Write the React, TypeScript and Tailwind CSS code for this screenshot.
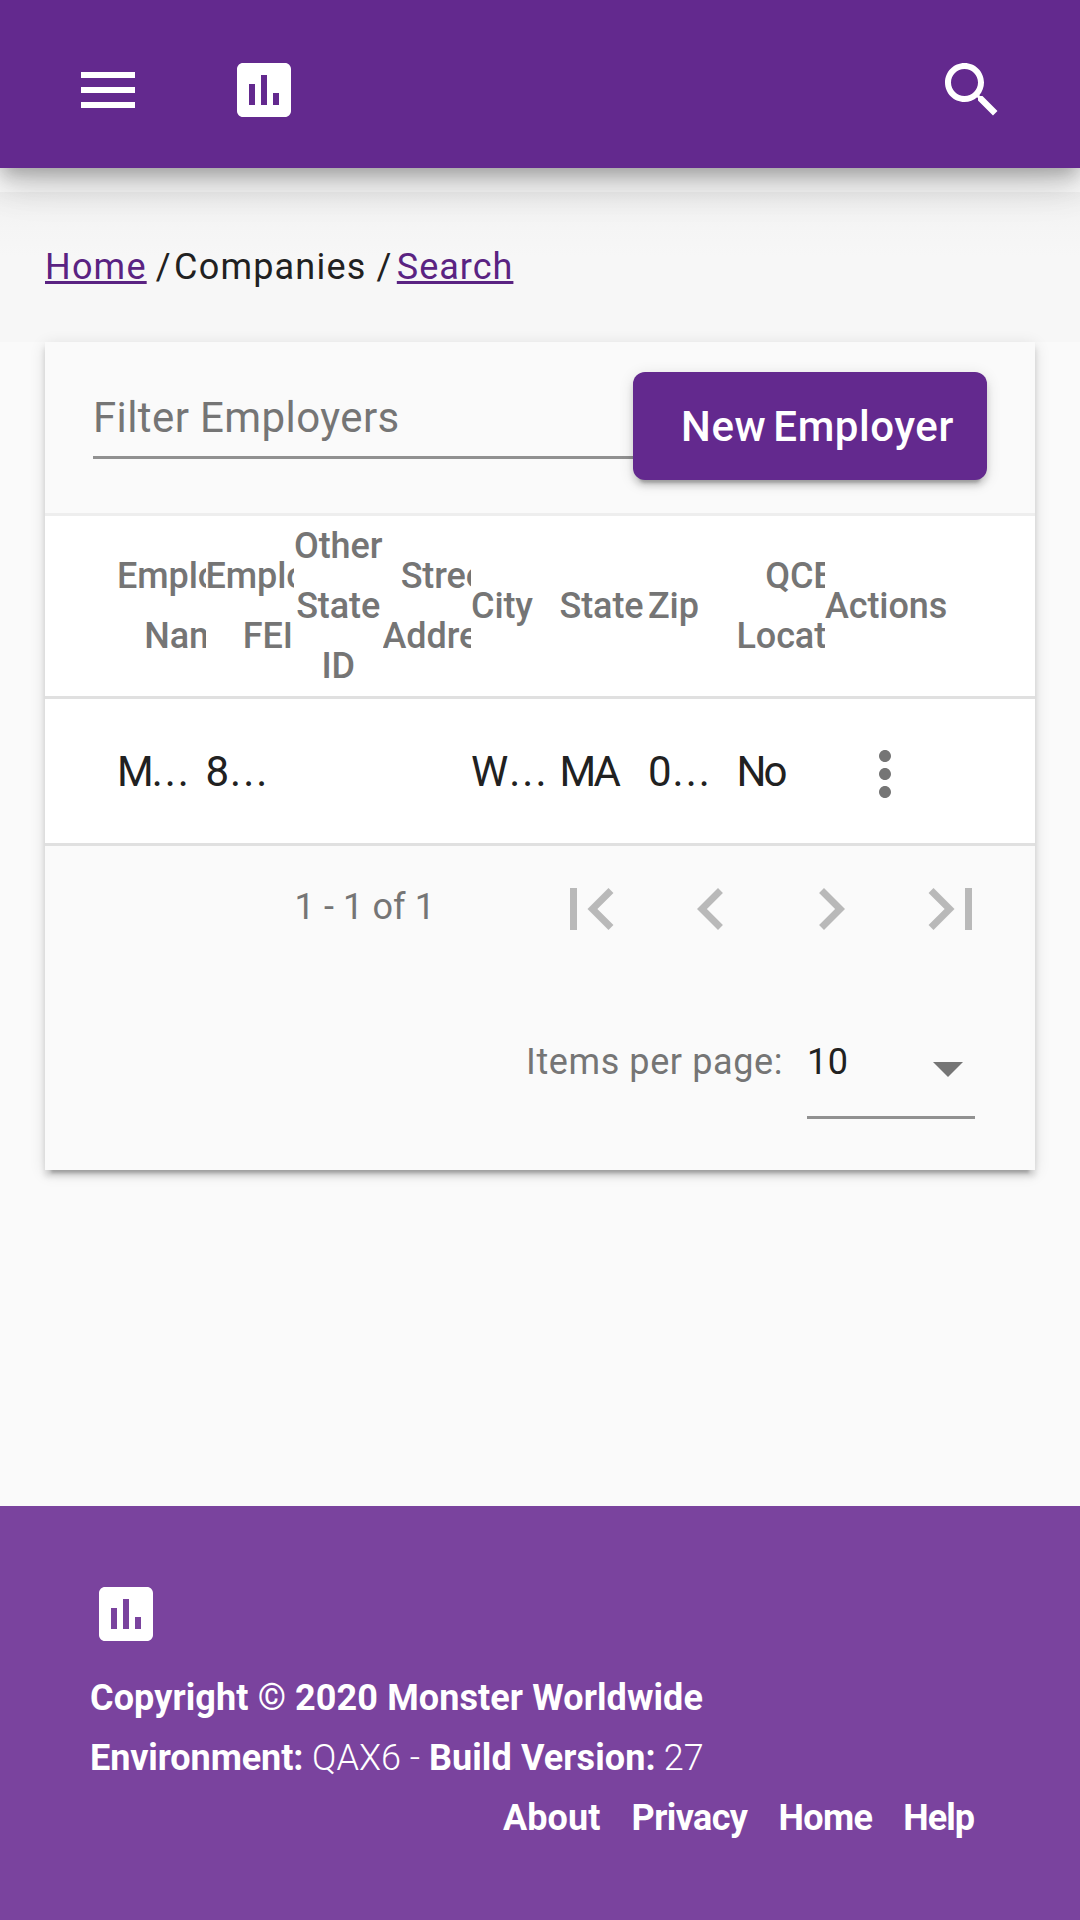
import React from "react";

const icons = {
  menu: "M3 18h18v-2H3v2zm0-5h18v-2H3v2zm0-7v2h18V6H3z",
  chart:
    "M19 3H5c-1.1 0-2 .9-2 2v14c0 1.1.9 2 2 2h14c1.1 0 2-.9 2-2V5c0-1.1-.9-2-2-2zM9 17H7v-7h2v7zm4 0h-2V7h2v10zm4 0h-2v-4h2v4z",
  search:
    "M15.5 14h-.79l-.28-.27C15.41 12.59 16 11.11 16 9.5 16 5.91 13.09 3 9.5 3S3 5.91 3 9.5 5.91 16 9.5 16c1.61 0 3.09-.59 4.23-1.57l.27.28v.79l5 4.99L20.49 19l-4.99-5zm-6 0C7.01 14 5 11.99 5 9.5S7.01 5 9.5 5 14 7.01 14 9.5 11.99 14 9.5 14z",
  more: "M12 8c1.1 0 2-.9 2-2s-.9-2-2-2-2 .9-2 2 .9 2 2 2zm0 2c-1.1 0-2 .9-2 2s.9 2 2 2 2-.9 2-2-.9-2-2-2zm0 6c-1.1 0-2 .9-2 2s.9 2 2 2 2-.9 2-2-.9-2-2-2z",
  first: "M18.41 16.59L13.82 12l4.59-4.59L17 6l-6 6 6 6zM6 6h2v12H6z",
  prev: "M15.41 7.41L14 6l-6 6 6 6 1.41-1.41L10.83 12z",
  next: "M10 6L8.59 7.41 13.17 12l-4.58 4.59L10 18l6-6z",
  last: "M5.59 7.41L10.18 12l-4.59 4.59L7 18l6-6-6-6zM16 6h2v12h-2z",
};

function Icon({ name, className }: { name: keyof typeof icons; className: string }) {
  return (
    <svg viewBox="0 0 24 24" fill="currentColor" className={className}>
      <path d={icons[name]} />
    </svg>
  );
}

const columns: { title: string[]; value: string; cut?: boolean }[] = [
  { title: ["Employer", "Name"], value: "M", cut: true },
  { title: ["Employer", "FEIN"], value: "8", cut: true },
  { title: ["Other", "State", "ID"], value: "" },
  { title: ["Street", "Address"], value: "" },
  { title: ["City"], value: "W", cut: true },
  { title: ["State"], value: "MA" },
  { title: ["Zip"], value: "0", cut: true },
  { title: ["QCEW", "Locations"], value: "No" },
];

function Header() {
  return (
    <header className="relative z-10 flex h-[168px] items-center bg-[#63298e] px-[72px] pb-[3px] pt-[15px] text-white shadow-[0_9px_15px_-3px_rgba(0,0,0,0.2),0_18px_30px_0_rgba(0,0,0,0.14),0_3px_54px_0_rgba(0,0,0,0.12)]">
      <Icon name="menu" className="size-[72px]" />
      <Icon name="chart" className="ml-[84px] size-[72px]" />
      <Icon name="search" className="ml-auto size-[72px]" />
    </header>
  );
}

function EmployersTable() {
  return (
    <section>
      <div className="box-content flex h-[180px] border-y-[3px] border-t-[#eee] border-b-[#e0e0e0] bg-white pl-[72px] text-[36px] font-medium leading-[60px] tracking-[-0.1px] text-[#757575]">
        {columns.map((c, i) => (
          <div key={i} className="flex w-[88.5px] shrink-0 items-center overflow-hidden">
            <div className="shrink-0 text-center">
              {c.title.map((t) => (
                <div key={t}>{t}</div>
              ))}
            </div>
          </div>
        ))}
        <div className="flex items-center">Actions</div>
      </div>
      <div className="box-content flex h-[144px] items-center border-b-[3px] border-[#e0e0e0] bg-white pl-[72px] text-[42px] text-[#212121]">
        {columns.map((c, i) => (
          <div key={i} className="w-[88.5px] shrink-0 whitespace-nowrap">
            {c.cut ? (
              <>
                {c.value}
                <span className={c.value === "M" ? "-ml-0.5 tracking-[2px]" : "ml-px tracking-[2px]"}>...</span>
              </>
            ) : (
              <span className="tracking-[-3px]">{c.value}</span>
            )}
          </div>
        ))}
        <div className="flex w-[120px] justify-center pt-[6px]">
          <Icon name="more" className="size-[72px] text-[#757575]" />
        </div>
      </div>
    </section>
  );
}

function Paginator() {
  return (
    <section className="pr-6 text-[36px] leading-[60px] text-[#757575]">
      <div className="flex h-[126px] items-center justify-end">
        <span className="mr-24 -mt-1 tracking-[0.1px]">1 - 1 of 1</span>
        {(["first", "prev", "next", "last"] as const).map((n) => (
          <span key={n} className="flex w-[120px] justify-center text-[#b9b9b9]">
            <Icon name={n} className="size-[84px]" />
          </span>
        ))}
      </div>
      <div className="mt-[60px] flex justify-end pr-9 tracking-[0.6px]">
        <span className="mr-6">Items per page:</span>
        <div className="flex h-[87px] w-[168px] justify-between border-b-[3px] border-[#919191] pr-3 text-[#212121]">
          <span>10</span>
          <svg viewBox="0 0 30 15" className="mt-[30px] h-[15px] w-[30px] fill-[#757575]">
            <path d="M0 0h30L15 15z" />
          </svg>
        </div>
      </div>
    </section>
  );
}

function Footer() {
  return (
    <footer className="mt-auto h-[414px] bg-[#7a439e] px-[90px] pt-[72px] text-[36px] font-bold leading-[60px] tracking-[0.1px] text-white">
      <Icon name="chart" className="size-[72px]" />
      <div className="mt-[18px]">
        Copyright <span className="font-normal">©</span> 2020 Monster Worldwide
      </div>
      <div>
        <span className="tracking-[-0.1px]">Environment: </span>
        <span className="font-light tracking-normal">QAX6 - </span>Build Version:{" "}
        <span className="-ml-px font-light">27</span>
      </div>
      <nav className="flex justify-end gap-[31px] pr-4 tracking-[-0.6px]">
        <a className="tracking-[0.1px]">About</a>
        <a>Privacy</a>
        <a>Home</a>
        <a className="tracking-[-1px]">Help</a>
      </nav>
    </footer>
  );
}

export default function App() {
  return (
    <div className="flex h-[1920px] w-[1080px] flex-col overflow-hidden bg-[#fafafa] font-['Roboto',sans-serif]">
      <Header />
      <div className="mt-6 flex h-[150px] items-center bg-[linear-gradient(#f1f1f1,#f5f5f5_36px,#f7f7f7_64px)] px-[45px] text-[36px] tracking-[1.2px] text-[#212121]">
        <p>
          <a className="text-[#5a2382] underline">Home</a> <span className="-ml-px mr-[-8px]">/</span> Companies{" "}
          <span className="mr-[-6px]">/</span>{" "}
          <a className="tracking-[1px] text-[#5a2382] underline">Search</a>
        </p>
      </div>
      <main className="mx-[45px] h-[828px] bg-[#fafafa] shadow-[0_9px_3px_-6px_rgba(0,0,0,0.2),0_6px_6px_0_rgba(0,0,0,0.14),0_3px_15px_0_rgba(0,0,0,0.12)]">
        <div className="flex h-[171px] px-12 pt-[30px]">
          <div className="h-[87px] w-[540px] border-b-[3px] border-[#919191] pt-[21px] text-[42px] leading-[50px] tracking-[0.4px] text-[#757575]">
            Filter Employers
          </div>
          <button className="h-[108px] w-[354px] whitespace-nowrap rounded-xl bg-[#63298e] pl-12 text-left text-[42px] font-medium tracking-[0.6px] [word-spacing:-4px] text-white shadow-[0_9px_3px_-6px_rgba(0,0,0,0.2),0_6px_6px_0_rgba(0,0,0,0.14),0_3px_15px_0_rgba(0,0,0,0.12)]">
            New Employer
          </button>
        </div>
        <EmployersTable />
        <Paginator />
      </main>
      <Footer />
    </div>
  );
}
